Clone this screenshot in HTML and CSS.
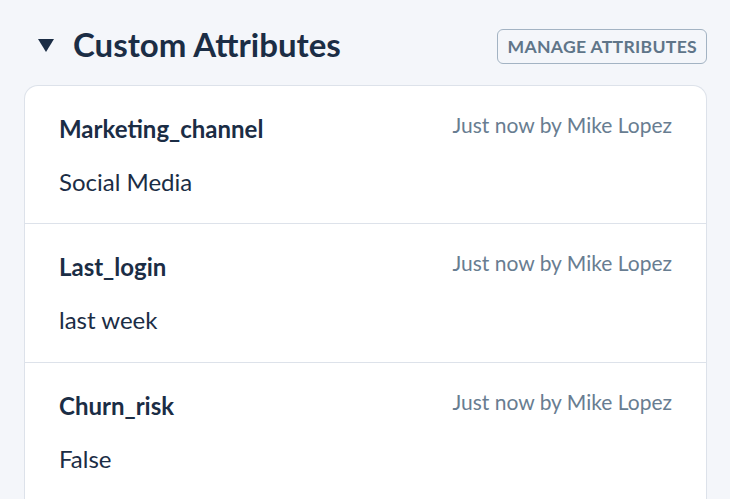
FILE: index.html
```html
<!DOCTYPE html>
<html>
<head>
<meta charset="utf-8">
<link rel="stylesheet" href="styles.css">
</head>
<body>
<div class="panel">
  <div class="header">
    <div class="title">
      <svg class="caret" width="16" height="14" viewBox="0 0 16 14"><path d="M0 0 H16 L8 13 Z" fill="#1b2d45"/></svg>
      <h2>Custom Attributes</h2>
    </div>
    <button class="manage">MANAGE ATTRIBUTES</button>
  </div>
  <div class="card">
    <div class="row first">
      <div class="row-top">
        <div class="name">Marketing_channel</div>
        <div class="meta">Just now by Mike Lopez</div>
      </div>
      <div class="value">Social Media</div>
    </div>
    <div class="row">
      <div class="row-top">
        <div class="name">Last_login</div>
        <div class="meta">Just now by Mike Lopez</div>
      </div>
      <div class="value">last week</div>
    </div>
    <div class="row">
      <div class="row-top">
        <div class="name">Churn_risk</div>
        <div class="meta">Just now by Mike Lopez</div>
      </div>
      <div class="value">False</div>
    </div>
  </div>
</div>
</body>
</html>
```
FILE: styles.css
```css
html, body {
  margin: 0;
  padding: 0;
  height: 100%;
  background: #f4f6fa;
  font-family: Lato, "Open Sans", sans-serif;
  color: #1b2d45;
  overflow: hidden;
}
.panel {
  height: 100vh;
  box-sizing: border-box;
  overflow: hidden;
  padding: 28px 23px 0 24px;
}
.header {
  display: flex;
  justify-content: space-between;
  align-items: center;
  height: 36px;
  margin-bottom: 21px;
}
.title {
  display: flex;
  align-items: center;
  gap: 19px;
  padding-left: 14px;
  padding-bottom: 3px;
}
.caret {
  display: block;
  margin-top: 3px;
}
h2 {
  margin: 0;
  font-size: 33px;
  font-weight: 700;
  color: #1b2d45;
  letter-spacing: 0;
  line-height: 1.2;
}
.manage {
  height: 35px;
  padding: 0 9px;
  border: 1px solid #a3b3c3;
  border-radius: 6px;
  background: transparent;
  font-family: Lato, sans-serif;
  font-size: 17.6px;
  font-weight: 700;
  color: #5f7589;
  letter-spacing: 0.3px;
}
.card {
  background: #fff;
  border: 1px solid #dde2ea;
  border-bottom: none;
  border-radius: 14px 14px 0 0;
  overflow: hidden;
}
.row {
  height: 139px;
  border-bottom: 1px solid #dde2ea;
  padding: 29px 34px 0 34px;
  box-sizing: border-box;
}
.row.first {
  height: 138px;
}
.row-top {
  display: flex;
  justify-content: space-between;
  align-items: flex-start;
}
.name {
  font-size: 24px;
  font-weight: 700;
  color: #1b2d45;
  line-height: 1.2;
}
.meta {
  margin-top: -3px;
  font-size: 21px;
  color: #687d91;
  line-height: 1.2;
}
.value {
  margin-top: 24px;
  font-size: 24px;
  color: #1b2d45;
  line-height: 1.2;
}
```
